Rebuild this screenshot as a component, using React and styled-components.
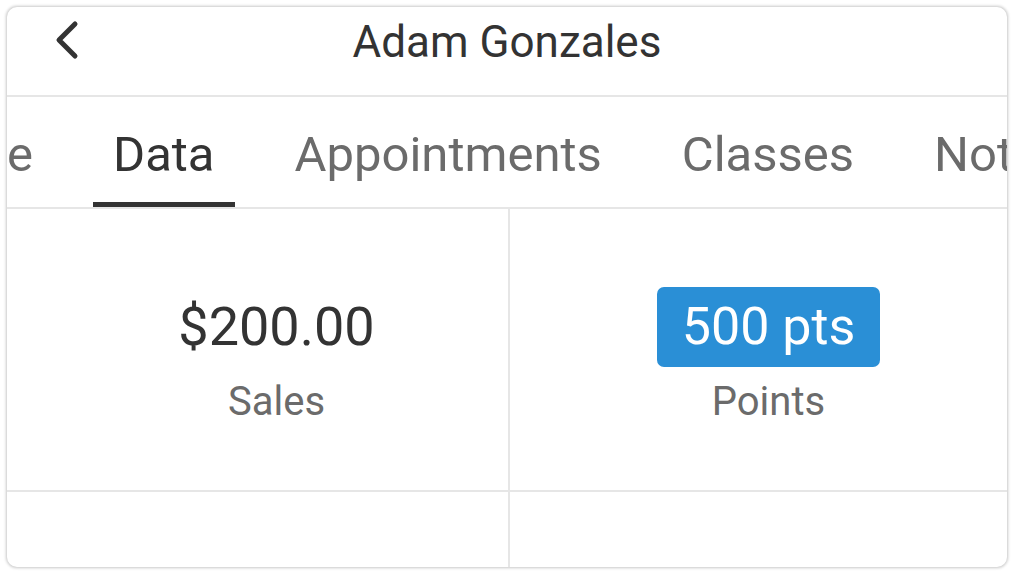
import React from 'react'
import styled, { createGlobalStyle } from 'styled-components'

const Global = createGlobalStyle`
  html, body {
    margin: 0;
    padding: 0;
    background: #ffffff;
    font-family: Roboto, "Noto Sans", Arial, sans-serif;
  }
`

const Page = styled.div`
  padding: 7px;
  width: 1015px;
  height: 575px;
  box-sizing: border-box;
`

const Card = styled.div`
  width: 1000px;
  height: 560px;
  border-radius: 10px;
  background: #fff;
  box-shadow: 0 0 3px 1px rgba(0, 0, 0, 0.22);
  overflow: hidden;
  display: flex;
  flex-direction: column;
`

const Header = styled.div`
  flex: none;
  height: 90px;
  box-sizing: border-box;
  padding-bottom: 22px;
  display: grid;
  grid-template-columns: 1fr auto 1fr;
  align-items: center;
  border-bottom: 2px solid #e6e6e6;
`

const Back = styled.button`
  justify-self: start;
  margin-left: 46px;
  padding: 0;
  border: none;
  background: none;
  display: flex;
  svg {
    display: block;
  }
`

const Title = styled.h1`
  margin: 0;
  padding-top: 4px;
  font-size: 44px;
  line-height: 1;
  font-weight: 400;
  color: #333;
`

const TabBar = styled.div`
  flex: none;
  height: 112px;
  box-sizing: border-box;
  display: flex;
  gap: 40px;
  border-bottom: 2px solid #e6e6e6;
  overflow: hidden;
`

const Tab = styled.div`
  flex: none;
  box-sizing: border-box;
  height: 110px;
  padding: 33px 20px 0;
  font-size: 49px;
  line-height: 1;
  white-space: nowrap;
  color: ${p => (p.$active ? '#333' : '#6b6b6b')};
  border-bottom: 5px solid ${p => (p.$active ? '#333' : 'transparent')};
`

const ClippedTab = styled(Tab)`
  width: 46px;
  display: flex;
  justify-content: flex-end;
  overflow: hidden;
`

const Grid = styled.div`
  flex: 1;
  min-height: 0;
  display: grid;
  grid-template-columns: 503px 1fr;
  grid-template-rows: 283px 1fr;
`

const EmptyCell = styled.div`
  border-right: ${p => (p.$right ? 'none' : '2px solid #e6e6e6')};
  border-bottom: ${p => (p.$last ? 'none' : '2px solid #e6e6e6')};
`

const Cell = styled(EmptyCell)`
  display: flex;
  flex-direction: column;
  align-items: center;
  padding-top: 78px;
  padding-left: ${p => p.$shift || 0}px;
`

const ValueRow = styled.div`
  height: 80px;
  display: flex;
  align-items: center;
`

const Value = styled.div`
  font-size: 54px;
  line-height: 1;
  color: #333;
`

const Badge = styled.div`
  height: 80px;
  box-sizing: border-box;
  padding: 0 25px;
  display: flex;
  align-items: center;
  border-radius: 7px;
  background: #2a8fd6;
  color: #fff;
  font-size: 52px;
  line-height: 1;
`

const Label = styled.div`
  margin-top: 15px;
  font-size: 40px;
  line-height: 1;
  color: #6b6b6b;
`

export default function App() {
  return (
    <Page>
      <Global />
      <Card>
        <Header>
          <Back aria-label="Back">
            <svg width="30" height="40" viewBox="0 0 30 40">
              <path d="M22 4 L6 20 L22 36" fill="none" stroke="#333" strokeWidth="5" strokeLinecap="round" strokeLinejoin="round" />
            </svg>
          </Back>
          <Title>Adam Gonzales</Title>
          <span />
        </Header>
        <TabBar>
          <ClippedTab>Profile</ClippedTab>
          <Tab $active>Data</Tab>
          <Tab>Appointments</Tab>
          <Tab>Classes</Tab>
          <Tab>Notes</Tab>
        </TabBar>
        <Grid>
          <Cell $shift={38}>
            <ValueRow>
              <Value>$200.00</Value>
            </ValueRow>
            <Label>Sales</Label>
          </Cell>
          <Cell $right $shift={20}>
            <ValueRow>
              <Badge>500 pts</Badge>
            </ValueRow>
            <Label>Points</Label>
          </Cell>
          <EmptyCell $last />
          <EmptyCell $right $last />
        </Grid>
      </Card>
    </Page>
  )
}
